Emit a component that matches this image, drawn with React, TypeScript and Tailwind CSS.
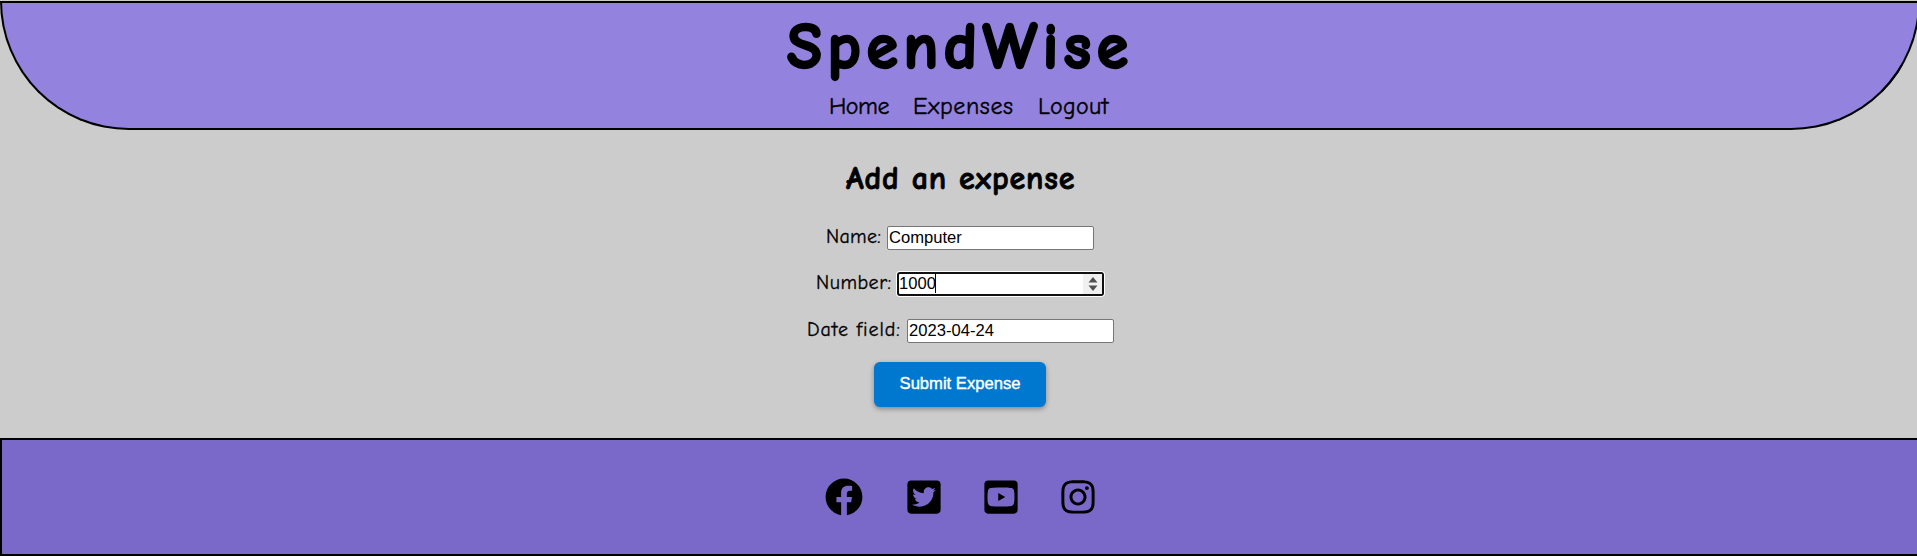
import type { ReactNode } from "react";
import { FaFacebook, FaInstagram, FaTwitterSquare, FaYoutubeSquare } from "react-icons/fa";

const comic = "font-['Comic_Sans_MS','Comic_Neue',Lato,sans-serif]";

function Field({ label, labelClass, children }: { label: string; labelClass: string; children: ReactNode }) {
  return (
    <div className="flex h-6 items-center">
      <label className={`pb-[2px] text-[20px] leading-6 whitespace-nowrap [-webkit-text-stroke:0.3px_black] ${labelClass}`}>{label}</label>
      {children}
    </div>
  );
}

const input =
  "h-6 w-[207px] rounded-[2px] border border-[#767676] bg-white pl-px font-['Liberation_Sans',Arial,sans-serif] text-[16.6px] leading-[21px] text-black outline-none";

export default function App() {
  return (
    <div className={`h-[556px] w-full overflow-hidden bg-[#ccc] pt-px text-black ${comic}`}>
      <header className="flex h-[129px] w-[1920px] flex-col items-start rounded-b-[130px] border-2 border-black bg-[#9483de] pl-[785px]">
        <h1 className="mt-[10px] h-[68px] text-[64px] leading-[68px] font-bold tracking-[5.6px] whitespace-nowrap [-webkit-text-stroke:2.4px_black] [stroke-linejoin:round]">SpendWise</h1>
        <nav className="mt-[11px] ml-[42px] flex h-7 text-[24px] leading-7 whitespace-nowrap [-webkit-text-stroke:0.4px_black]">
          <a className="w-[84px] tracking-[-0.5px]">Home</a>
          <a className="w-[125px] tracking-[0.6px]">Expenses</a>
          <a className="tracking-[0.3px]">Logout</a>
        </nav>
      </header>

      <main className="flex h-[308px] flex-col items-start">
        <h2 className="mt-[29px] ml-[846px] h-10 text-[32px] leading-10 font-bold tracking-[0.8px] whitespace-nowrap [-webkit-text-stroke:0.8px_black]">Add an expense</h2>
        <div className="mt-[27px] ml-[826px]">
          <Field label="Name:" labelClass="w-[61px] tracking-[0.3px]">
            <input className={input} defaultValue="Computer" />
          </Field>
        </div>
        <div className="mt-[22px] ml-[816px]">
          <Field label="Number:" labelClass="w-[81px] tracking-[0.5px]">
            <div className="flex h-6 w-[207px] items-stretch rounded-[3px] border-2 border-[#101010] bg-white font-['Liberation_Sans',Arial,sans-serif] text-[16.6px] leading-[19px] shadow-[0_0_0_1px_#fff]">
              <span>1000</span>
              <span className="-ml-px h-[19px] w-px bg-black" />
              <span className="ml-auto flex w-[19px] items-center justify-center bg-[#f0f0f0]">
                <svg width="10" height="14" viewBox="0 0 10 14" fill="#505050">
                  <path d="M5 0 9.5 5.5H.5zM5 14 .5 8.5h9z" />
                </svg>
              </span>
            </div>
          </Field>
        </div>
        <div className="mt-[23px] ml-[807px]">
          <Field label="Date field:" labelClass="w-[100px] tracking-[0.95px]">
            <input className={input} defaultValue="2023-04-24" />
          </Field>
        </div>
        <button className="mt-[19px] ml-[874px] h-[45px] w-[172px] rounded-[6px] bg-[#0078d0] pb-px font-['Liberation_Sans',Arial,sans-serif] text-[16.6px] text-white shadow-[0_2px_5px_rgba(0,0,0,0.35)] [-webkit-text-stroke:0.4px_white]">
          Submit Expense
        </button>
      </main>

      <footer className="flex h-[118px] w-[1920px] items-start border-2 border-black bg-[#7b69ca] pt-[37.5px] pl-[823px]">
        <FaFacebook className="h-[38px] w-[38px]" />
        <FaTwitterSquare className="ml-[42px] h-[38px] w-[38px]" />
        <FaYoutubeSquare className="ml-[39px] h-[38px] w-[38px]" />
        <FaInstagram className="ml-[39px] h-[38px] w-[38px]" />
      </footer>
    </div>
  );
}
